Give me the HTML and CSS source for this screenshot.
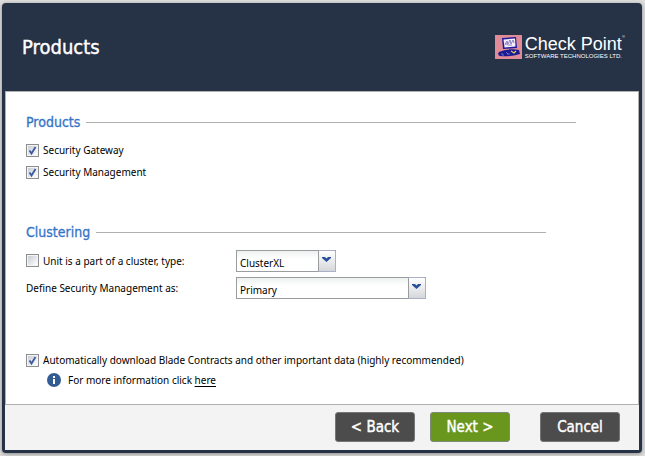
FILE: index.html
```html
<!DOCTYPE html>
<html lang="en">
<head>
<meta charset="utf-8">
<title>Products</title>
<link rel="stylesheet" href="styles.css">
</head>
<body>
<form class="wizard">
  <header class="wizard-header">
    <h1 class="wizard-title">Products</h1>
    <div class="brand">
      <svg class="brand-mark" viewBox="0 0 27 24" aria-hidden="true">
        <rect width="27" height="24" fill="#e08c98"/>
        <path d="M7 3 L21 2 L22 13 L8 14 Z" fill="#1b1c9c"/>
        <path d="M8.500 4.500 L20 3.500 L20.500 11.500 L9.500 12.500 Z" fill="#f4eef8"/>
        <path d="M10 10 L12 6 L13 9 L15 5 L16 9 L18 5 L19 8 M10 8 L13 10 L17 10" fill="none" stroke="#7468b8" stroke-width=".8"/>
        <path d="M4 17 Q13 13 24 15 L25 19 Q15 22 5 21 Q2 20 4 17 Z" fill="#171a92"/>
        <path d="M7 18 v2 h2 M11 17 l2 2 M12 19 h3" fill="none" stroke="#8c86c8" stroke-width=".8"/>
        <path d="M16 16 l3 2 2-2" fill="none" stroke="#e0c860" stroke-width="1.300"/>
      </svg>
      <div class="brand-text">
        <span class="brand-name">Check Point<span class="brand-reg">®</span></span>
        <span class="brand-sub">SOFTWARE TECHNOLOGIES LTD.</span>
      </div>
    </div>
  </header>

  <main class="wizard-body">
    <section class="section section-products">
      <h2 class="section-title">Products</h2>
      <label class="option"><input class="check" type="checkbox" checked>Security Gateway</label>
      <label class="option"><input class="check" type="checkbox" checked>Security Management</label>
    </section>

    <section class="section section-clustering">
      <h2 class="section-title">Clustering</h2>
      <div class="field">
        <label class="option field-label"><input class="check" type="checkbox">Unit is a part of a cluster, type:</label>
        <span class="combo combo-short">
          <select class="combo-select" aria-label="Cluster type"><option>ClusterXL</option></select>
          <span class="combo-arrow" aria-hidden="true"><svg viewBox="0 0 9 6"><path d="M0 0h3l1.500 1.500L6 0h3v1L4.500 5 0 1z"/></svg></span>
        </span>
      </div>
      <div class="field">
        <label class="field-label" for="role">Define Security Management as:</label>
        <span class="combo combo-long">
          <select class="combo-select" id="role"><option>Primary</option></select>
          <span class="combo-arrow" aria-hidden="true"><svg viewBox="0 0 9 6"><path d="M0 0h3l1.500 1.500L6 0h3v1L4.500 5 0 1z"/></svg></span>
        </span>
      </div>
    </section>

    <section class="section-download">
      <label class="option"><input class="check" type="checkbox" checked>Automatically download Blade Contracts and other important data (highly recommended)</label>
      <p class="info">
        <svg class="info-icon" viewBox="0 0 14 14" aria-hidden="true"><circle cx="7" cy="7" r="7" fill="#325c93"/><path d="M6 3h2v2H6zM6 6h2v5H6z" fill="#fff"/></svg>
        <span>For more information click <a href="#">here</a></span>
      </p>
    </section>
  </main>

  <footer class="wizard-footer">
    <button class="btn" type="button">&lt; Back</button>
    <button class="btn btn-next" type="submit">Next &gt;</button>
    <button class="btn btn-cancel" type="button">Cancel</button>
  </footer>
</form>
</body>
</html>
```
FILE: styles.css
```css
* { box-sizing: border-box; }

body {
  margin: 0;
  min-height: 100vh;
  display: flex;
  padding: 3px 3px 3px 2px;
  background: #dedede;
  color: #000;
  font: 10px/20px "Noto Sans", sans-serif;
}

.wizard {
  flex: 1;
  display: flex;
  flex-direction: column;
  padding: 0 3px 3px;
  background: #263245;
  border-radius: 4px;
  box-shadow: 0 1px 4px #888;
}

.wizard-header {
  height: 88px;
  display: flex;
  align-items: center;
  justify-content: space-between;
  padding: 0 17px;
  color: #fff;
}

.wizard-title,
.section-title,
.btn {
  font-family: Tahoma, "DejaVu Sans Condensed", sans-serif;
}

.wizard-title {
  margin: 0;
  font-size: 20px;
  line-height: 24px;
  font-weight: 400;
  -webkit-text-stroke: 0.4px currentColor;
}

.brand { display: flex; gap: 3px; }
.brand-mark { width: 27px; height: 24px; }

.brand-text {
  display: flex;
  flex-direction: column;
  font-family: "Liberation Sans", Arial, sans-serif;
}

.brand-name { position: relative; font-size: 18px; line-height: 18px; }
.brand-reg { position: absolute; top: 0; left: 100%; font-size: 4px; line-height: 4px; }
.brand-sub { font-size: 6px; line-height: 6px; }

.wizard-body {
  flex: 1;
  padding: 20px 20px 12px;
  background: #fff;
  border: 1px solid #b0b0b0;
}

.section-products { max-width: 550px; height: 110px; }
.section-clustering { max-width: 520px; height: 127px; }

.section-title {
  display: flex;
  align-items: center;
  gap: 6px;
  margin: 0 0 7px;
  color: #3575c8;
  font-size: 14px;
  line-height: 20px;
  font-weight: 400;
  -webkit-text-stroke: 0.3px currentColor;
}

.section-clustering .section-title { margin-bottom: 5px; }

.section-title::after {
  content: "";
  flex: 1;
  height: 1px;
  background: #b0b0b0;
}

.option {
  display: flex;
  align-items: center;
  gap: 4px;
  height: 22px;
}

.check {
  appearance: none;
  flex: none;
  width: 13px;
  height: 13px;
  margin: 0;
  border: 1px solid #8e8f8f;
  background: linear-gradient(135deg, #c9ccd4, #fff) content-box, #f4f4f4;
  padding: 1px;
}

.check:checked {
  background: url("data:image/svg+xml,%3Csvg xmlns='http://www.w3.org/2000/svg' viewBox='0 0 11 11'%3E%3Cpath d='M2.500 5.500L4.500 8.500 8.500 2' fill='none' stroke='%233b5a9f' stroke-width='1.800'/%3E%3C/svg%3E") padding-box, linear-gradient(135deg, #c9ccd4, #fff) content-box, #f4f4f4;
}

.field { display: flex; align-items: center; height: 27px; }
.field-label { width: 210px; }

.combo { position: relative; height: 22px; }
.combo-short { width: 100px; }
.combo-long { width: 190px; }

.combo-select {
  appearance: none;
  display: block;
  width: 100%;
  height: 22px;
  margin: 0;
  padding: 2px 20px 0 3px;
  border: 1px solid #9a9da0;
  border-radius: 0;
  background: linear-gradient(#eef1f0, #fff 8px);
  color: #000;
  font: inherit;
}

.combo-arrow {
  position: absolute;
  inset: 0 0 0 auto;
  width: 18px;
  display: grid;
  place-items: center;
  padding: 0 1px 1px 0;
  border: 1px solid #a9b0c8;
  border-left-color: #9a9da0;
  border-radius: 0 2px 0 0;
  background: linear-gradient(#fff, #d6d7da);
  pointer-events: none;
}

.combo-arrow svg { width: 9px; height: 6px; fill: #28509a; }

.info {
  display: flex;
  align-items: center;
  gap: 7px;
  margin: 0;
  padding-left: 21px;
  height: 18px;
}

.info-icon { width: 14px; height: 14px; }
.info a { color: inherit; text-underline-offset: 2px; }

.wizard-footer {
  display: flex;
  justify-content: flex-end;
  gap: 15px;
  padding: 7px 19px 8px;
  background: #f3f3f3;
}

.btn {
  width: 80px;
  height: 30px;
  padding: 0;
  border: 1px solid #747678;
  border-radius: 3px;
  background: #4c4c4c;
  color: #fff;
  font-size: 15px;
  -webkit-text-stroke: 0.4px currentColor;
}

.btn-next { background: #69961d; border-color: #7d8a78; }
.btn-cancel { margin-left: 15px; }
```
